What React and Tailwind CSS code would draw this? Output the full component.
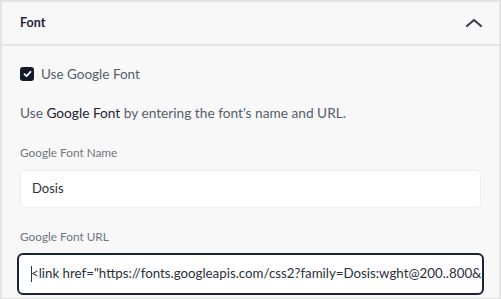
import React from 'react';

export default function App() {
  return (
    <div className="w-[501px] h-[299px] overflow-hidden bg-[#f8f8f8] font-['Lato','Noto_Sans',sans-serif]">
      <div className="border-2 border-[#e4e4e4]">
        {/* Header */}
        <div className="h-[44px] flex items-center justify-between pl-[18px] pr-[16px] border-b-2 border-[#e4e4e4]">
          <span className="text-[12.5px] font-bold text-[#1f2533]">Font</span>
          <svg width="18" height="10" viewBox="0 0 18 10" fill="none">
            <path d="M2 8 L9 2 L16 8" stroke="#394150" strokeWidth="2.2" strokeLinecap="round" strokeLinejoin="round" />
          </svg>
        </div>

        {/* Body */}
        <div className="px-[18px] pt-[18px] pb-[3px]">
          <label className="flex items-center h-5 gap-[7px]">
            <span className="w-[14px] h-[14px] rounded-[3px] bg-[#141b2b] flex items-center justify-center">
              <svg width="9" height="8" viewBox="0 0 9 8" fill="none">
                <path d="M1.5 4.2 L3.6 6.2 L7.5 1.8" stroke="#fff" strokeWidth="1.8" strokeLinecap="round" strokeLinejoin="round" />
              </svg>
            </span>
            <span className="text-[13.5px] leading-5 text-[#565d6b]">Use Google Font</span>
          </label>

          <p className="mt-[19px] text-[13.7px] leading-5 text-[#565d6b]">
            Use <span className="text-[#1f2533]">Google Font</span> by entering the font's name and URL.
          </p>

          <div className="mt-[21px] text-[11.8px] leading-[18px] text-[#70767f]">Google Font Name</div>
          <div className="mt-[8px] h-[38px] rounded-[5px] bg-white border border-[#eeeeee] flex items-center pl-[11px] text-[13px] text-[#2a303c]">
            Dosis
          </div>

          <div className="mt-[20px] text-[11.8px] leading-[18px] text-[#70767f]">Google Font URL</div>
          <div className="mt-[7px] -mx-[3px] h-[42px] rounded-[6px] bg-white border-2 border-[#1c2333] flex items-center pl-[12px] overflow-hidden whitespace-nowrap text-[13.3px] text-[#2a303c]">
            <span className="inline-block w-px h-[16px] bg-[#2a303c] -mr-px"></span>
            &lt;link href="https://fonts.googleapis.com/css2?family=Dosis:wght@200..800&amp;
          </div>
        </div>
      </div>
    </div>
  );
}
